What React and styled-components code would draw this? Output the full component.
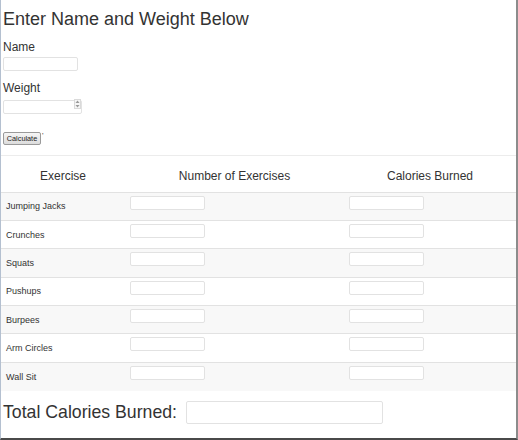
import React from "react";
import styled, { createGlobalStyle } from "styled-components";

const Global = createGlobalStyle`
  html, body { margin: 0; padding: 0; background: #fff; }
  body { font-family: "Liberation Sans", Arial, sans-serif; color: #333; }
`;

const Frame = styled.div`
  width: 518px;
  height: 440px;
  box-sizing: border-box;
  border-left: 1px solid #b4c0d0;
  border-right: 2px solid #8c8c8c;
  border-bottom: 2px solid #4a4a4a;
  overflow: hidden;
  display: flex;
  flex-direction: column;
`;

const Form = styled.div`
  padding: 0 0 0 2px;
  display: flex;
  flex-direction: column;
  align-items: flex-start;
`;

const Title = styled.h2`
  margin: 9px 0 0 0;
  font-size: 18px;
  font-weight: normal;
  line-height: 20px;
  color: #333;
`;

const Label = styled.label`
  display: block;
  font-size: 12px;
  line-height: 14px;
  margin-top: ${(p) => p.$mt}px;
  color: #333;
`;

const TextInput = styled.input`
  box-sizing: border-box;
  width: ${(p) => p.$w}px;
  height: ${(p) => p.$h}px;
  border: 1px solid #e2e2e2;
  border-radius: 2px;
  padding: 0;
  margin: ${(p) => p.$mt || 0}px 0 0 0;
  background: #fff;
  outline: none;
`;

const NumberWrap = styled.div`
  position: relative;
  margin-top: 2px;
  width: 79px;
  height: 14px;
`;

const Spinner = styled.div`
  position: absolute;
  right: 1px;
  top: 2px;
  width: 7px;
  height: 10px;
  border: 1px solid #dadada;
  box-sizing: border-box;
  background: #f6f6f6;
  display: flex;
  align-items: center;
  justify-content: center;
`;

const ButtonRow = styled.div`
  display: flex;
  align-items: flex-start;
  margin-top: 21px;
  gap: 1px;
`;

const Button = styled.button`
  font-family: "Liberation Sans", Arial, sans-serif;
  font-size: 7.3px;
  height: 13px;
  width: 38px;
  padding: 0;
  line-height: 11px;
  color: #222;
  border: 1px solid #9a9a9a;
  border-radius: 2px;
  background: linear-gradient(#f6f6f6, #dcdcdc);
`;

const Tick = styled.span`
  font-size: 8px;
  line-height: 8px;
  color: #444;
`;

const Rule = styled.div`
  height: 1px;
  background: #ececec;
  margin-top: 10px;
`;

const Table = styled.table`
  width: 100%;
  border-collapse: collapse;
  table-layout: fixed;
`;

const Th = styled.th`
  font-weight: normal;
  font-size: 12px;
  color: #333;
  height: 36px;
  padding: 5px 0 0 0;
  text-align: center;
  border-bottom: 1px solid #e2e2e2;
  box-sizing: border-box;
`;

const Tr = styled.tr`
  background: ${(p) => (p.$striped ? "#f8f8f8" : "#fff")};
`;

const Td = styled.td`
  height: 28.4px;
  box-sizing: border-box;
  padding: 0 5px;
  font-size: 9px;
  color: #333;
  border-top: 1px solid #e2e2e2;
  vertical-align: ${(p) => (p.$top ? "top" : "middle")};
  padding-top: ${(p) => (p.$top ? 3 : 0)}px;
`;

const Total = styled.div`
  display: flex;
  align-items: center;
  gap: 9px;
  padding-left: 2px;
  margin-top: 10px;
`;

const TotalLabel = styled.span`
  font-size: 17.7px;
  color: #333;
`;

const exercises = [
  "Jumping Jacks",
  "Crunches",
  "Squats",
  "Pushups",
  "Burpees",
  "Arm Circles",
  "Wall Sit",
];

export default function App() {
  return (
    <>
      <Global />
      <Frame>
        <Form>
          <Title>Enter Name and Weight Below</Title>
          <Label $mt={11}>Name</Label>
          <TextInput $w={75} $h={14} $mt={3} />
          <Label $mt={10}>Weight</Label>
          <NumberWrap>
            <TextInput $w={79} $h={14} />
            <Spinner>
              <svg width="5" height="8" viewBox="0 0 5 8">
                <path d="M2.5 0.5 L4.5 3 L0.5 3 Z" fill="#999" />
                <path d="M0.5 5 L4.5 5 L2.5 7.5 Z" fill="#999" />
              </svg>
            </Spinner>
          </NumberWrap>
          <ButtonRow>
            <Button>Calculate</Button>
            <Tick>'</Tick>
          </ButtonRow>
        </Form>
        <Rule />
        <Table>
          <colgroup>
            <col style={{ width: 124 }} />
            <col style={{ width: 219 }} />
            <col />
          </colgroup>
          <thead>
            <tr>
              <Th>Exercise</Th>
              <Th>Number of Exercises</Th>
              <Th>Calories Burned</Th>
            </tr>
          </thead>
          <tbody>
            {exercises.map((ex, i) => (
              <Tr key={ex} $striped={i % 2 === 0}>
                <Td>{ex}</Td>
                <Td $top>
                  <TextInput $w={75} $h={14} />
                </Td>
                <Td $top>
                  <TextInput $w={75} $h={14} />
                </Td>
              </Tr>
            ))}
          </tbody>
        </Table>
        <Total>
          <TotalLabel>Total Calories Burned:</TotalLabel>
          <TextInput $w={197} $h={23} />
        </Total>
      </Frame>
    </>
  );
}
